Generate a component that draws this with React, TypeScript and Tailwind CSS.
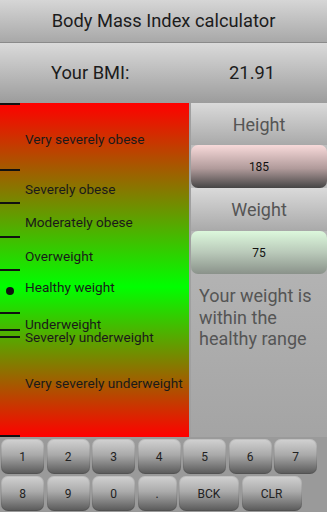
import React from "react";

const ticks = [0, 66, 99, 133, 166, 209, 226, 233, 332];
const labels: [string, number][] = [
  ["Very severely obese", 36],
  ["Severely obese", 86],
  ["Moderately obese", 119],
  ["Overweight", 153],
  ["Healthy weight", 184],
  ["Underweight", 221],
  ["Severely underweight", 234],
  ["Very severely underweight", 280],
];

function Key({ label, w }: { label: string; w: string }) {
  return (
    <div
      className={`${w} h-[35px] shrink-0 rounded-[7px] flex items-center justify-center text-[12px] text-[#222] bg-[linear-gradient(to_bottom,#d2d2d2,#aaaaaa_45%,#585858)] shadow-[inset_0_0_0_1px_rgba(0,0,0,0.08)]`}
    >
      {label}
    </div>
  );
}

export default function App() {
  return (
    <div
      className="w-[327px] h-[512px] overflow-hidden flex flex-col bg-[#9a9a9a]"
      style={{ fontFamily: "Roboto, 'Noto Sans', sans-serif" }}
    >
      <div className="h-[42px] shrink-0 flex items-center justify-center text-[18.3px] text-[#1c1c1c] bg-[linear-gradient(to_bottom,#d6d6d6,#a8a8a8)]">
        Body Mass Index calculator
      </div>
      <div className="h-[1px] shrink-0 bg-[#8a8a8a]" />
      <div className="h-[60px] shrink-0 flex items-center justify-between pl-[51px] pr-[52px] text-[18.3px] text-[#1c1c1c] bg-[linear-gradient(to_bottom,#dadada,#9c9c9c)]">
        <span>Your BMI:</span>
        <span>21.91</span>
      </div>
      <div className="h-[334px] shrink-0 flex">
        <div className="relative w-[189px] shrink-0 bg-[linear-gradient(to_bottom,#ff0000,#00ff00_55%,#ff0000)]">
          {ticks.map((t) => (
            <div
              key={t}
              className="absolute left-0 w-[20px] h-[2px] bg-[#111]"
              style={{ top: t }}
            />
          ))}
          <div className="absolute left-[6px] top-[184px] w-[8px] h-[8px] rounded-full bg-[#111]" />
          {labels.map(([l, c]) => (
            <div
              key={l}
              className="absolute left-[25px] text-[13.6px] leading-[16px] text-[#1a1a1a] whitespace-nowrap"
              style={{ top: c - 8 }}
            >
              {l}
            </div>
          ))}
        </div>
        <div className="w-[2px] shrink-0 bg-[#a0a0a0]" />
        <div className="flex-1 flex flex-col bg-[linear-gradient(to_bottom,#c2c2c2,#a4a4a4)]">
          <div className="h-[42px] flex items-center justify-center text-[18px] text-[#555] bg-[linear-gradient(to_bottom,#dadada,#a9a9a9)]">
            Height
          </div>
          <div className="h-[43px] rounded-[7px] flex items-center justify-center text-[12px] text-[#111] bg-[linear-gradient(to_bottom,#f8dada,#b09a9a_55%,#454545)]">
            185
          </div>
          <div className="h-[43px] flex items-center justify-center text-[18px] text-[#555] bg-[linear-gradient(to_bottom,#dadada,#a9a9a9)]">
            Weight
          </div>
          <div className="h-[43px] rounded-[7px] flex items-center justify-center text-[12px] text-[#111] bg-[linear-gradient(to_bottom,#dcf8dc,#b9c9b9_50%,#8a928a)]">
            75
          </div>
          <div className="pl-[8px] pr-[4px] pt-[11px] text-[18px] leading-[21.5px] text-[#555]">
            Your weight is within the healthy range
          </div>
        </div>
      </div>
      <div className="flex flex-col gap-[2px] pt-[2px] pl-[1px]">
        <div className="flex gap-[2.5px]">
          {["1", "2", "3", "4", "5", "6", "7"].map((k) => (
            <Key key={k} label={k} w="w-[43px]" />
          ))}
        </div>
        <div className="flex gap-[2.5px]">
          <Key label="8" w="w-[43px]" />
          <Key label="9" w="w-[43px]" />
          <Key label="0" w="w-[43px]" />
          <Key label="." w="w-[39px]" />
          <Key label="BCK" w="w-[60px]" />
          <Key label="CLR" w="w-[60px]" />
        </div>
      </div>
    </div>
  );
}
